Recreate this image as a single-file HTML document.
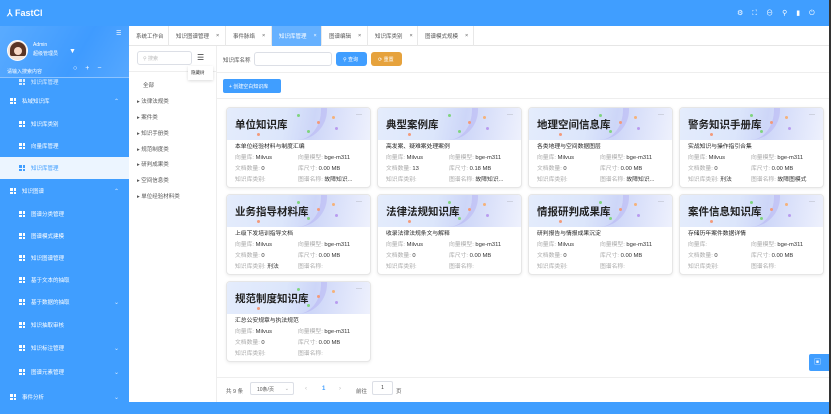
<!DOCTYPE html>
<html><head><meta charset="utf-8"><style>
*{box-sizing:border-box;margin:0;padding:0}
body{width:831px;height:414px;overflow:hidden;font-family:"Liberation Sans","Noto Sans CJK SC",sans-serif;background:#fff;position:relative;font-size:6px;color:#333}
.abs{position:absolute}
.top{left:0;top:0;width:831px;height:26px;background:#409eff}
.side{left:0;top:26px;width:129px;height:388px;background:#409eff;color:#fff}
.si{position:absolute;left:0;width:129px;height:22px;font-size:5.5px;color:#fff;display:flex;align-items:center}
.grid{display:inline-block;width:6px;height:6px;margin-right:6px;background:
linear-gradient(#409eff,#409eff) 2.5px 0/1px 6px no-repeat,linear-gradient(#409eff,#409eff) 0 2.5px/6px 1px no-repeat,#fff}
.chev{position:absolute;right:10px;font-size:6px;opacity:.8}
.tab{position:absolute;top:26px;height:20px;font-size:5.5px;color:#555;display:flex;align-items:center;padding-left:7px;border-right:1px solid #e8e8e8}
.card{position:absolute;width:145px;height:81px;border:1px solid #e6e6e6;border-radius:4px;background:#fff;box-shadow:0 1px 3px rgba(0,0,0,.08);overflow:hidden}
.ch{height:32px;background:linear-gradient(100deg,#e4ecfc 0%,#dce6fb 40%,#cdd6f8 60%,#eef1fd 100%);position:relative}
.ch b{position:absolute;left:8px;top:9px;font-size:10.5px;color:#222}
.ch i{position:absolute;right:8px;top:4px;font-style:normal;font-size:6px;color:#666}
.dot{position:absolute;width:3px;height:3px;border-radius:50%}
.cb{padding:2px 8px;font-size:5.8px;line-height:11px;color:#aaa}
.cb .d{color:#222}
.row{display:flex}.row span{width:63px;white-space:nowrap;overflow:hidden}
.row span span{width:auto}
.v{color:#333}
.tree{position:absolute;left:137px;font-size:5.5px;color:#555}
</style></head><body>
<div class="abs top"></div>
<div class="abs" style="left:7px;top:8px;color:#fff;font-size:9px;font-weight:bold">⅄ FastCl</div>
<div class="abs" style="left:737px;top:8px;color:#fff;font-size:7px;letter-spacing:9px">⚙⛶⊖⚲▮⏻</div>
<div class="abs" style="left:829px;top:0;width:2px;height:414px;background:#333"></div>

<div class="abs side"></div>
<div class="abs" style="left:0;top:26px;width:129px;height:52px;background:linear-gradient(120deg,#5aabff,#3f9bff 60%,#56a8ff)"></div>
<div class="abs" style="left:116px;top:30px;color:#fff;font-size:6px">☰</div>
<div class="abs" style="left:7px;top:40px;width:21px;height:21px;border-radius:50%;background:#f4e3d7;border:1px solid #fff;overflow:hidden"><div style="position:absolute;left:2px;top:1px;width:16px;height:14px;border-radius:8px 8px 2px 2px;background:#5a3526"></div><div style="position:absolute;left:6px;top:6px;width:8px;height:8px;border-radius:50%;background:#f7d8c6"></div></div>
<div class="abs" style="left:33px;top:42px;color:#fff;font-size:5px">Admin</div>
<div class="abs" style="left:33px;top:50px;color:#fff;font-size:5px">超级管理员</div>
<div class="abs" style="left:69px;top:48px;color:#fff;font-size:7px">▼</div>
<div class="abs" style="left:7px;top:68px;color:#fff;font-size:5px">请输入搜索内容</div>
<div class="abs" style="left:73px;top:65px;color:#fff;font-size:7px;letter-spacing:8px">○+−</div>
<div class="abs" style="left:0;top:77px;width:129px;height:1px;background:#8cc3ff"></div>
<div class="si" style="top:78px;height:8px;padding-left:19px;overflow:hidden;opacity:.8"><span class="grid"></span>知识库管理</div>
<div class="si" style="top:90px;padding-left:10px"><span class="grid"></span>私域知识库<span class="chev">⌃</span></div>
<div class="si" style="top:113px;padding-left:19px"><span class="grid"></span>知识库类别</div>
<div class="si" style="top:135px;padding-left:19px"><span class="grid"></span>向量库管理</div>
<div class="si" style="top:157px;padding-left:19px;background:#ecf5ff;color:#409eff"><span class="grid" style="background-color:#409eff;background-image:linear-gradient(#ecf5ff,#ecf5ff),linear-gradient(#ecf5ff,#ecf5ff)"></span>知识库管理</div>
<div class="si" style="top:180px;padding-left:10px"><span class="grid"></span>知识图谱<span class="chev">⌃</span></div>
<div class="si" style="top:203px;padding-left:19px"><span class="grid"></span>图谱分类管理</div>
<div class="si" style="top:225px;padding-left:19px"><span class="grid"></span>图谱模式建模</div>
<div class="si" style="top:247px;padding-left:19px"><span class="grid"></span>知识图谱管理</div>
<div class="si" style="top:269px;padding-left:19px"><span class="grid"></span>基于文本的抽取</div>
<div class="si" style="top:291px;padding-left:19px"><span class="grid"></span>基于数据的抽取<span class="chev">⌄</span></div>
<div class="si" style="top:314px;padding-left:19px"><span class="grid"></span>知识抽取审核</div>
<div class="si" style="top:337px;padding-left:19px"><span class="grid"></span>知识标注管理<span class="chev">⌄</span></div>
<div class="si" style="top:361px;padding-left:19px"><span class="grid"></span>图谱元素管理<span class="chev">⌄</span></div>
<div class="si" style="top:386px;padding-left:10px"><span class="grid"></span>事件分析<span class="chev">⌄</span></div>

<div class="abs" style="left:129px;top:45px;width:700px;height:1px;background:#e6e6e6"></div>
<div class="tab" style="left:129px;width:40px">系统工作台</div>
<div class="tab" style="left:169px;width:57px">知识图谱管理 <span style="margin-left:7px">×</span></div>
<div class="tab" style="left:226px;width:46px">事件脉络 <span style="margin-left:7px">×</span></div>
<div class="tab" style="left:272px;width:50px;background:#66b1ff;color:#fff">知识库管理 <span style="margin-left:7px">×</span></div>
<div class="tab" style="left:322px;width:46px">图谱编辑 <span style="margin-left:7px">×</span></div>
<div class="tab" style="left:368px;width:50px">知识库类别 <span style="margin-left:7px">×</span></div>
<div class="tab" style="left:418px;width:56px">图谱模式规模 <span style="margin-left:7px">×</span></div>

<div class="abs" style="left:216px;top:46px;width:1px;height:356px;background:#eee"></div>
<div class="abs" style="left:129px;top:71px;width:87px;height:1px;background:#eee"></div>
<div class="abs" style="left:137px;top:51px;width:55px;height:14px;border:1px solid #dcdfe6;border-radius:3px;font-size:5px;color:#bbb;padding:3px 0 0 5px">⚲ 搜索</div>
<div class="abs" style="left:197px;top:53px;font-size:8px;color:#333">☰</div>
<div class="abs" style="left:188px;top:66px;width:25px;height:14px;background:#fff;box-shadow:0 1px 3px rgba(0,0,0,.15);font-size:4.5px;color:#333;padding:4px 0 0 3px">隐藏树</div>
<div class="tree" style="top:81px;left:143px">全部</div>
<div class="tree" style="top:97px">▸ 法律法规类</div>
<div class="tree" style="top:113px">▸ 案件类</div>
<div class="tree" style="top:129px">▸ 知识手册类</div>
<div class="tree" style="top:145px">▸ 规范制度类</div>
<div class="tree" style="top:160px">▸ 研判成果类</div>
<div class="tree" style="top:176px">▸ 空间信息类</div>
<div class="tree" style="top:192px">▸ 单位经验材料类</div>

<div class="abs" style="left:223px;top:56px;font-size:5.5px;color:#555">知识库名称</div>
<div class="abs" style="left:254px;top:52px;width:78px;height:14px;border:1px solid #dcdfe6;border-radius:3px"></div>
<div class="abs" style="left:336px;top:52px;width:31px;height:14px;background:#409eff;border-radius:3px;color:#fff;font-size:5px;padding:4px 0 0 7px">⚲ 查询</div>
<div class="abs" style="left:371px;top:52px;width:31px;height:14px;background:#e6a23c;border-radius:3px;color:#fff;font-size:5px;padding:4px 0 0 7px">⟳ 重置</div>
<div class="abs" style="left:216px;top:72px;width:613px;height:1px;background:#eee"></div>
<div class="abs" style="left:223px;top:79px;width:58px;height:14px;background:#409eff;border-radius:2px;color:#fff;font-size:5px;padding:4px 0 0 6px">+ 创建空白知识库</div>
<div class="abs" style="left:216px;top:98px;width:613px;height:1px;background:#eee"></div>

<div id="cards"></div>

<div class="abs" style="left:216px;top:377px;width:613px;height:1px;background:#eee"></div>
<div class="abs" style="left:226px;top:387px;font-size:5.5px;color:#555">共 9 条</div>
<div class="abs" style="left:250px;top:382px;width:44px;height:13px;border:1px solid #dcdfe6;border-radius:2px;font-size:5px;color:#555;padding:3px 0 0 6px">10条/页 <span style="float:right;margin-right:4px;color:#aaa">⌄</span></div>
<div class="abs" style="left:305px;top:386px;font-size:6px;color:#bbb">‹</div>
<div class="abs" style="left:322px;top:386px;font-size:6px;color:#409eff;font-weight:bold">1</div>
<div class="abs" style="left:339px;top:386px;font-size:6px;color:#bbb">›</div>
<div class="abs" style="left:356px;top:387px;font-size:5.5px;color:#555">前往</div>
<div class="abs" style="left:372px;top:381px;width:21px;height:14px;border:1px solid #dcdfe6;border-radius:2px;font-size:5px;text-align:center;padding-top:3px">1</div>
<div class="abs" style="left:396px;top:387px;font-size:5.5px;color:#555">页</div>
<div class="abs" style="left:809px;top:354px;width:20px;height:17px;background:#409eff;border-radius:2px 0 0 2px;color:#fff;font-size:7px;padding:3px 0 0 5px">▣</div>
<div class="abs" style="left:129px;top:402px;width:700px;height:12px;background:#409eff"></div>

<script>
const d=[
["单位知识库","本单位经验材料与制度汇编","Milvus","0","0.00 MB","","故障知识..."],
["典型案例库","高发案、疑难案处理案例","Milvus","13","0.18 MB","","故障知识..."],
["地理空间信息库","各类地理与空间数据图层","Milvus","0","0.00 MB","","故障知识..."],
["警务知识手册库","实战知识与操作指引合集","Milvus","0","0.00 MB","刑法","故障图模式"],
["业务指导材料库","上级下发培训指导文档","Milvus","0","0.00 MB","刑法",""],
["法律法规知识库","收录法律法规条文与解释","Milvus","0","0.00 MB","",""],
["情报研判成果库","研判报告与情报成果沉淀","Milvus","0","0.00 MB","",""],
["案件信息知识库","存储历年案件数据详情","","0","0.00 MB","",""],
["规范制度知识库","汇总公安规章与执法规范","Milvus","0","0.00 MB","",""]];
const xs=[226,377,528,679],ys=[107,194,281];let h="";
d.forEach((c,i)=>{const x=xs[i%4],y=ys[Math.floor(i/4)];
h+=`<div class="card" style="left:${x}px;top:${y}px"><div class="ch">
<div style="position:absolute;left:60px;top:0;width:40px;height:32px;border-radius:0 0 30px 0;border-right:6px solid rgba(170,160,240,.35)"></div>
<div class="dot" style="left:70px;top:6px;background:#7fd47f"></div><div class="dot" style="left:90px;top:13px;background:#f39a7a"></div><div class="dot" style="left:105px;top:8px;background:#f5b27a"></div><div class="dot" style="left:108px;top:19px;background:#b89cf0"></div><div class="dot" style="left:80px;top:22px;background:#7fd47f"></div><div class="dot" style="left:30px;top:25px;background:#f39a7a"></div>
<b>${c[0]}</b><i>···</i></div><div class="cb"><div class="d">${c[1]}</div>
<div class="row"><span>向量库: <span class="v">${c[2]}</span></span><span>向量模型: <span class="v">bge-m311</span></span></div>
<div class="row"><span>文档数量: <span class="v">${c[3]}</span></span><span>库尺寸: <span class="v">${c[4]}</span></span></div>
<div class="row"><span>知识库类别: <span class="v">${c[5]}</span></span><span>图谱名称: <span class="v">${c[6]}</span></span></div></div></div>`});
document.getElementById('cards').innerHTML=h;
</script>
</body></html>
